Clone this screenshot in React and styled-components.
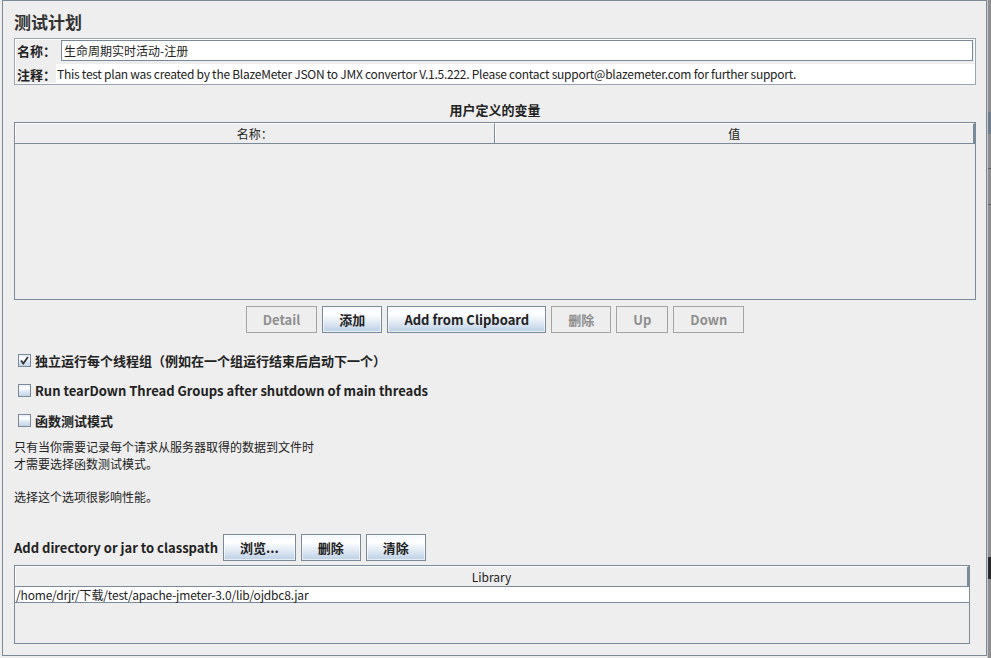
import React from "react";
import styled, { createGlobalStyle } from "styled-components";

const GlobalStyle = createGlobalStyle`
  html, body { margin: 0; padding: 0; background: #eeeeee; }
  body {
    font-family: "Noto Sans CJK SC", "Noto Sans", sans-serif;
    font-size: 12px;
    color: #222;
  }
  * { box-sizing: border-box; }
`;

const Frame = styled.div`
  display: flex;
  width: 991px;
  height: 658px;
  padding-left: 2px;
  background: #eeeeee;
  overflow: hidden;
`;

const Panel = styled.div`
  width: 985px;
  height: 656px;
  border: 1px solid #7a8a99;
  display: flex;
  flex-direction: column;
  padding: 0 10px 0 11px;
`;

const Strip = styled.div`
  width: 4px;
  height: 658px;
  border-left: 1px solid #c9c9c9;
  background: #8e8e8e;
  display: flex;
  flex-direction: column;
`;

const StripMark = styled.div`
  height: ${(p) => p.$h}px;
  margin-top: ${(p) => p.$top}px;
  background: ${(p) => p.$color};
`;

const Title = styled.div`
  margin-top: 11px;
  height: 20px;
  line-height: 20px;
  font-size: 17px;
  font-weight: bold;
  color: #333;
`;

const InfoBox = styled.div`
  margin-top: 6px;
  border: 1px solid #9aa5b0;
  box-shadow: inset 0 0 0 1px #ffffff;
  padding: 1px 1px 0 1px;
  display: flex;
  flex-direction: column;
  gap: 3px;
`;

const InfoRow = styled.div`
  display: flex;
  align-items: center;
  height: ${(p) => p.$h}px;
`;

const FieldLabel = styled.span`
  padding-left: 1px;
  font-size: 13px;
  font-weight: bold;
  color: #222;
  margin-right: ${(p) => p.$gap}px;
  white-space: nowrap;
`;

const TextField = styled.div`
  flex: 1;
  height: 21px;
  margin-right: 1px;
  border: 1px solid #7a8a99;
  background: #ffffff;
  padding-left: 2px;
  line-height: 19px;
  font-size: 12px;
  color: #222;
`;

const CommentText = styled.div`
  flex: 1;
  height: 20px;
  background: #ffffff;
  padding-left: 1px;
  line-height: 20px;
  font-size: 12px;
  letter-spacing: -0.26px;
  color: #222;
  white-space: nowrap;
  overflow: hidden;
`;

const SectionTitle = styled.div`
  margin-top: 15px;
  height: 20px;
  line-height: 20px;
  text-align: center;
  font-size: 13px;
  font-weight: bold;
  color: #222;
`;

const TableBox = styled.div`
  margin-top: ${(p) => p.$mt}px;
  margin-right: ${(p) => p.$mr || 0}px;
  height: ${(p) => p.$h}px;
  border: 1px solid #7a8a99;
  display: flex;
  flex-direction: column;
`;

const HeaderRow = styled.div`
  display: flex;
  height: 21px;
  border-bottom: 1px solid #7a8a99;
`;

const HeaderCell = styled.div`
  flex: 1;
  border-top: 1px solid #ffffff;
  border-left: 1px solid #ffffff;
  border-right: ${(p) => (p.$last ? 2 : 1)}px solid #7a8a99;
  text-align: center;
  line-height: 19px;
  font-size: 12px;
  color: #222;
`;

const DataRow = styled.div`
  height: 16px;
  background: #ffffff;
  border-bottom: 1px solid #7a8a99;
  padding-left: 1px;
  line-height: 15px;
  font-size: 12px;
  letter-spacing: -0.18px;
  color: #222;
  white-space: nowrap;
`;

const ButtonBar = styled.div`
  margin-top: 6px;
  display: flex;
  justify-content: center;
  gap: 5px;
`;

const Button = styled.div`
  height: 27px;
  padding: 0 16px;
  display: flex;
  align-items: center;
  justify-content: center;
  font-size: 13px;
  font-weight: bold;
  white-space: nowrap;
  border: 1px solid ${(p) => (p.$disabled ? "#a3a3a3" : "#7a8a99")};
  color: ${(p) => (p.$disabled ? "#8e8e8e" : "#222")};
  background: ${(p) =>
    p.$disabled
      ? "#eeeeee"
      : "linear-gradient(to bottom, #f3f7fb 0%, #ffffff 28%, #e4ecf5 58%, #bcd0e5 100%)"};
  box-shadow: ${(p) => (p.$disabled ? "none" : "inset 0 0 0 1px rgba(255,255,255,0.6)")};
`;

const CheckList = styled.div`
  margin-top: 12px;
  display: flex;
  flex-direction: column;
`;

const CheckRow = styled.div`
  height: 30px;
  display: flex;
  align-items: center;
  padding-left: 4px;
  gap: 4px;
`;

const CheckBox = styled.div`
  width: 13px;
  height: 13px;
  border: 1px solid #7a8a99;
  background: linear-gradient(to bottom, #e6eef7 0%, #ffffff 30%, #dde8f3 60%, #c2d4e8 100%);
  display: flex;
  align-items: center;
  justify-content: center;
`;

const CheckLabel = styled.span`
  font-size: 13px;
  font-weight: bold;
  color: #222;
  white-space: nowrap;
`;

const Note = styled.div`
  margin-top: 4px;
  font-size: 12px;
  line-height: 16.5px;
  color: #222;
`;

const NoteLine = styled.div`
  height: 16.5px;
`;

const ClasspathRow = styled.div`
  margin-top: 29px;
  display: flex;
  align-items: center;
  gap: 5px;
`;

const ClasspathLabel = styled.span`
  font-size: 13px;
  font-weight: bold;
  color: #222;
  white-space: nowrap;
`;

const Check = () => (
  <svg width="9" height="9" viewBox="0 0 9 9">
    <path d="M1 4.5 L3.3 7.5 L8 1" fill="none" stroke="#333" strokeWidth="1.8" />
  </svg>
);

const buttons = [
  { label: "Detail", disabled: true },
  { label: "添加" },
  { label: "Add from Clipboard" },
  { label: "删除", disabled: true },
  { label: "Up", disabled: true },
  { label: "Down", disabled: true },
];

const options = [
  { label: "独立运行每个线程组（例如在一个组运行结束后启动下一个）", checked: true },
  { label: "Run tearDown Thread Groups after shutdown of main threads", checked: false },
  { label: "函数测试模式", checked: false },
];

export default function App() {
  return (
    <>
      <GlobalStyle />
      <Frame>
        <Panel>
          <Title>测试计划</Title>
          <InfoBox>
            <InfoRow $h={21}>
              <FieldLabel $gap={5}>名称：</FieldLabel>
              <TextField>生命周期实时活动-注册</TextField>
            </InfoRow>
            <InfoRow $h={20}>
              <FieldLabel $gap={0}>注释：</FieldLabel>
              <CommentText>
                This test plan was created by the BlazeMeter JSON to JMX convertor V.1.5.222. Please contact support@blazemeter.com for further support.
              </CommentText>
            </InfoRow>
          </InfoBox>

          <SectionTitle>用户定义的变量</SectionTitle>
          <TableBox $mt={2} $h={178}>
            <HeaderRow>
              <HeaderCell>名称：</HeaderCell>
              <HeaderCell $last>值</HeaderCell>
            </HeaderRow>
          </TableBox>

          <ButtonBar>
            {buttons.map((b) => (
              <Button key={b.label} $disabled={b.disabled}>
                {b.label}
              </Button>
            ))}
          </ButtonBar>

          <CheckList>
            {options.map((o) => (
              <CheckRow key={o.label}>
                <CheckBox>{o.checked && <Check />}</CheckBox>
                <CheckLabel>{o.label}</CheckLabel>
              </CheckRow>
            ))}
          </CheckList>

          <Note>
            <NoteLine>只有当你需要记录每个请求从服务器取得的数据到文件时</NoteLine>
            <NoteLine>才需要选择函数测试模式。</NoteLine>
            <NoteLine />
            <NoteLine>选择这个选项很影响性能。</NoteLine>
          </Note>

          <ClasspathRow>
            <ClasspathLabel>Add directory or jar to classpath</ClasspathLabel>
            <Button>浏览...</Button>
            <Button>删除</Button>
            <Button>清除</Button>
          </ClasspathRow>

          <TableBox $mt={4} $h={79} $mr={6}>
            <HeaderRow>
              <HeaderCell $last>Library</HeaderCell>
            </HeaderRow>
            <DataRow>/home/drjr/下载/test/apache-jmeter-3.0/lib/ojdbc8.jar</DataRow>
          </TableBox>
        </Panel>
        <Strip>
          <StripMark $top={112} $h={22} $color="#6f7d8c" />
          <StripMark $top={34} $h={1} $color="#5a5a5a" />
          <StripMark $top={35} $h={1} $color="#5a5a5a" />
          <StripMark $top={352} $h={22} $color="#2a2a2a" />
        </Strip>
      </Frame>
    </>
  );
}
